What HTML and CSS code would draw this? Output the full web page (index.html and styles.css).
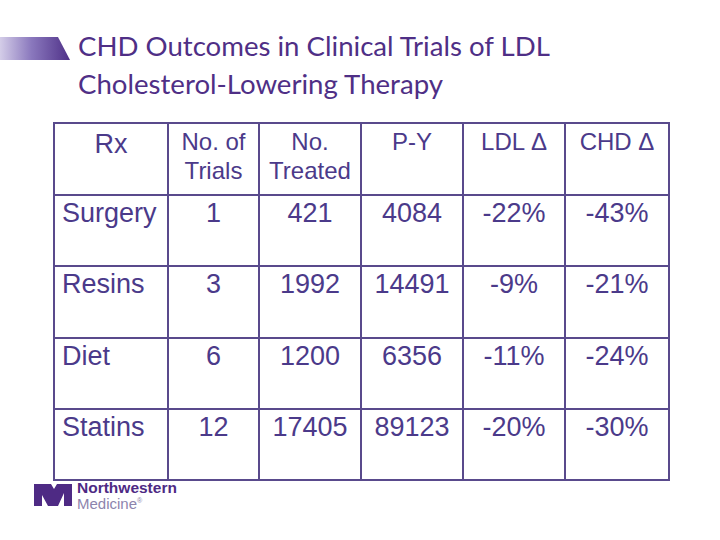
FILE: index.html
```html
<!DOCTYPE html>
<html>
<head>
<meta charset="utf-8">
<link rel="stylesheet" href="styles.css">
</head>
<body>
<div class="slide">
  <header class="head">
    <div class="banner"></div>
    <h1 class="title">CHD Outcomes in Clinical Trials of LDL<br>Cholesterol-Lowering Therapy</h1>
  </header>
  <table class="trials">
    <colgroup>
      <col class="c-rx"><col class="c-n"><col class="c-t"><col class="c-py"><col class="c-ldl"><col class="c-chd">
    </colgroup>
    <tr class="hrow">
      <th class="rx">Rx</th>
      <th>No. of<br>Trials</th>
      <th>No.<br>Treated</th>
      <th>P-Y</th>
      <th>LDL Δ</th>
      <th>CHD Δ</th>
    </tr>
    <tr><td class="name">Surgery</td><td>1</td><td>421</td><td>4084</td><td>-22%</td><td>-43%</td></tr>
    <tr><td class="name">Resins</td><td>3</td><td>1992</td><td>14491</td><td>-9%</td><td>-21%</td></tr>
    <tr><td class="name">Diet</td><td>6</td><td>1200</td><td>6356</td><td>-11%</td><td>-24%</td></tr>
    <tr><td class="name">Statins</td><td>12</td><td>17405</td><td>89123</td><td>-20%</td><td>-30%</td></tr>
  </table>
  <footer class="logo">
    <svg class="mark" width="38" height="22" viewBox="0 0 38 22">
      <polygon fill="#4e2a84" points="0,0 17,0 20,5 23,0 38,0 38,22 30,22 30,9 24,22 14,22 8,11 8,22 0,22"/>
    </svg>
    <div class="words">
      <div class="nw">Northwestern</div>
      <div class="med">Medicine<sup>®</sup></div>
    </div>
  </footer>
</div>
</body>
</html>
```
FILE: styles.css
```css
html, body {
  margin: 0;
  padding: 0;
  background: #ffffff;
}
.slide {
  width: 720px;
  height: 540px;
  overflow: hidden;
  display: flex;
  flex-direction: column;
}
.head {
  display: flex;
  align-items: flex-start;
  margin-top: 27px;
}
.banner {
  width: 70px;
  height: 23px;
  margin-top: 10px;
  background: linear-gradient(to right, #d4cde8 0%, #8a78bd 45%, #4f3188 100%);
  clip-path: polygon(0 0, 58px 0, 70px 100%, 0 100%);
}
.title {
  margin: 0 0 0 8px;
  font-family: Lato, "Open Sans", sans-serif;
  font-weight: 400;
  font-size: 27.6px;
  line-height: 38px;
  color: #4f2f86;
}
.trials {
  margin: 19px 0 0 53px;
  width: 615px;
  table-layout: fixed;
  border-collapse: collapse;
  border: 2px solid #594a8c;
  font-family: "Liberation Sans", Arial, sans-serif;
  color: #4b3a8a;
}
.c-rx { width: 114px; }
.c-n { width: 91px; }
.c-t { width: 102px; }
.c-py { width: 102px; }
.c-ldl { width: 102px; }
.c-chd { width: 104px; }
.trials th, .trials td {
  border: 2px solid #594a8c;
  vertical-align: top;
  text-align: center;
  padding: 0;
}
.trials th {
  font-weight: 400;
  font-size: 24px;
  line-height: 29px;
  padding-top: 3px;
  height: 67px;
}
.trials th.rx {
  font-size: 27px;
  padding-top: 6px;
  height: 64px;
}
.trials td {
  font-size: 27px;
  line-height: 32px;
  padding-top: 1px;
  height: 68.25px;
}
.trials td.name {
  text-align: left;
  padding-left: 7px;
}
.logo {
  display: flex;
  align-items: flex-start;
  margin: 0 0 0 34px;
  gap: 5px;
}
.mark {
  margin-top: 3px;
  display: block;
}
.words {
  font-family: "Liberation Sans", Arial, sans-serif;
  line-height: 13px;
}
.nw {
  font-weight: 700;
  font-size: 15.5px;
  color: #4e2a84;
}
.med {
  color: #8d84ad;
  font-size: 15px;
}
.med sup {
  font-size: 7px;
  vertical-align: 6px;
}
```
